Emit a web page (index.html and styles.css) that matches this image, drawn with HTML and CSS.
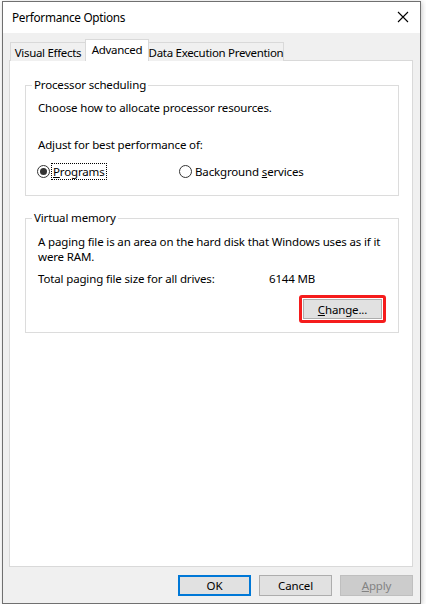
FILE: index.html
```html
<!DOCTYPE html>
<html>
<head>
<meta charset="utf-8">
<link rel="stylesheet" href="styles.css">
</head>
<body>
<div class="window">
  <div class="titlebar">
    <span class="title">Performance Options</span>
    <svg class="close" width="12" height="12" viewBox="0 0 12 12"><path d="M1 1L11 11M11 1L1 11" stroke="#000" stroke-width="1.1" fill="none"/></svg>
  </div>
  <div class="body">
    <div class="tabs">
      <div class="tab t1">Visual Effects</div>
      <div class="tab sel t2">Advanced</div>
      <div class="tab t3">Data Execution Prevention</div>
    </div>
    <div class="panel">
      <fieldset class="group g1">
        <legend>Processor scheduling</legend>
        <div class="line l-choose">Choose how to allocate processor resources.</div>
        <div class="line l-adjust">Adjust for best performance of:</div>
        <div class="radios">
          <div class="radio r1"><span class="circle on"></span><span class="focus"><u>P</u>rograms</span></div>
          <div class="radio r2"><span class="circle"></span><span class="rlabel">Background <u>s</u>ervices</span></div>
        </div>
      </fieldset>
      <fieldset class="group g2">
        <legend>Virtual memory</legend>
        <div class="para">A paging file is an area on the hard disk that Windows uses as if it were RAM.</div>
        <div class="total"><span class="tlabel">Total paging file size for all drives:</span><span>6144 MB</span></div>
        <div class="change-row">
          <div class="highlight"><div class="btn change"><u>C</u>hange...</div></div>
        </div>
      </fieldset>
    </div>
    <div class="buttons">
      <div class="btn ok">OK</div>
      <div class="btn">Cancel</div>
      <div class="btn disabled"><u>A</u>pply</div>
    </div>
  </div>
</div>
</body>
</html>
```
FILE: styles.css
```css
html, body {
  margin: 0;
  padding: 0;
  background: #ffffff;
}
body {
  font-family: "Noto Sans", "Open Sans", sans-serif;
  font-size: 11.5px;
  letter-spacing: -0.15px;
  color: #000;
}
.window {
  box-sizing: border-box;
  margin: 1px 0 0 2px;
  width: 419px;
  height: 603px;
  border: 1px solid #707070;
  box-shadow: 1px 1px 5px rgba(0,0,0,0.22);
  display: flex;
  flex-direction: column;
  background: #f0f0f0;
}
.titlebar {
  height: 31px;
  background: #fff;
  display: flex;
  align-items: center;
  justify-content: space-between;
  padding: 0 11px 0 9px;
  flex: none;
}
.title {
  font-size: 11.8px;
  letter-spacing: -0.3px;
  margin-top: -1px;
}
.close {
  margin-top: -2px;
}
.body {
  flex: 1;
  display: flex;
  flex-direction: column;
  padding: 7px 7px 7px 6px;
}
.tabs {
  display: flex;
  align-items: flex-end;
  padding-left: 1px;
  height: 21px;
  margin-bottom: -1px;
  position: relative;
  z-index: 1;
}
.tab {
  box-sizing: border-box;
  height: 19px;
  border: 1px solid #d9d9d9;
  border-bottom: none;
  background: #f0f0f0;
  display: flex;
  align-items: center;
  justify-content: center;
  line-height: 16px;
  white-space: nowrap;
  letter-spacing: -0.3px;
}
.t1 { width: 76px; padding-top: 1px; }
.t2 { width: 64px; margin-left: -1px; height: 22px; background: #fff; border-color: #d9d9d9; padding-bottom: 2px; }
.t3 { width: 136px; margin-left: -1px; padding-top: 1px; }
.panel {
  flex: 1;
  background: #fff;
  border: 1px solid #d9d9d9;
  display: flex;
  flex-direction: column;
}
.group {
  margin: 16px 13px 0 15px;
  border: 1px solid #dcdcdc;
  padding: 0 12px 0 12px;
  min-width: 0;
}
.group legend {
  padding: 0 2px;
  margin-left: -6px;
  line-height: 16px;
}
.line { line-height: 15px; }
.l-choose { margin-top: 7px; }
.l-adjust { margin-top: 22px; }
.radios {
  display: flex;
  margin-top: 11px;
  padding-bottom: 15px;
}
.radio {
  display: flex;
  align-items: center;
  height: 17px;
}
.r1 { width: 142px; margin-left: -1px; }
.circle {
  box-sizing: border-box;
  width: 13px;
  height: 13px;
  border: 1px solid #333;
  border-radius: 50%;
  background: #fff;
  display: flex;
  align-items: center;
  justify-content: center;
  margin-right: 2px;
}
.circle.on::after {
  content: "";
  width: 7px;
  height: 7px;
  border-radius: 50%;
  background: #333;
}
.focus {
  outline: 1px dotted #000;
  outline-offset: 0;
  line-height: 15px;
  padding: 0 1px;
}
.rlabel { margin-left: 1px; }
.g2 { margin-top: 14px; }
.para {
  margin-top: 8px;
  line-height: 15px;
  padding-right: 2px;
}
.total {
  margin-top: 7px;
  line-height: 15px;
  display: flex;
}
.tlabel { width: 231px; }
.change-row {
  display: flex;
  justify-content: flex-end;
  margin-top: 9px;
  padding-bottom: 9px;
  padding-right: 0;
}
.highlight {
  border: 3px solid #f51c1c;
  border-radius: 3px;
  padding: 1px;
  background: #fff;
}
.btn {
  box-sizing: border-box;
  width: 73px;
  height: 21px;
  background: #e1e1e1;
  border: 1px solid #adadad;
  display: flex;
  align-items: center;
  justify-content: center;
  line-height: 15px;
}
.btn.change { width: 79px; height: 20px; }
.buttons {
  display: flex;
  justify-content: flex-end;
  gap: 8px;
  margin-top: 8px;
  padding-right: 0;
}
.btn.ok {
  border: 2px solid #0078d7;
}
.btn.disabled {
  background: #cccccc;
  border-color: #bfbfbf;
  color: #838383;
}
```
